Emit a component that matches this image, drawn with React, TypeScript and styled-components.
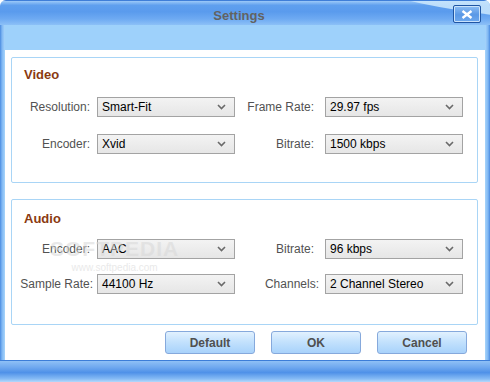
import { ReactElement } from "react";
import styled, { createGlobalStyle } from "styled-components";

const GlobalStyle = createGlobalStyle`
  html, body {
    margin: 0;
    padding: 0;
    background: #ffffff;
  }
  body {
    font-family: "Liberation Sans", Arial, sans-serif;
  }
`;

const Window = styled.div`
  display: flex;
  flex-direction: column;
  width: 490px;
  height: 382px;
  overflow: hidden;
  border-radius: 6px 6px 0 0;
  background-color: #ffffff;
`;

const TitleBar = styled.div`
  position: relative;
  display: flex;
  align-items: center;
  justify-content: center;
  height: 25px;
  flex-shrink: 0;
  background: linear-gradient(#9cc9f8 0%, #5f9fee 18%, #5a9bed 45%, #6eaaf2 75%, #8cc0f7 100%);
  border-top: 1px solid #3f7ed8;
  box-sizing: border-box;
  overflow: hidden;

  &::after {
    content: "";
    position: absolute;
    left: 340px;
    top: -40px;
    width: 300px;
    height: 62px;
    border-radius: 0 0 0 100%;
    background: linear-gradient(#d4ebfd, #c2e2fc);
    opacity: 0.9;
  }
`;

const Title = styled.span`
  position: relative;
  z-index: 1;
  color: #626262;
  font-size: 13px;
  font-weight: 700;
  margin-top: 4px;
  margin-left: -12px;
`;

const CloseButton = styled.div`
  position: absolute;
  z-index: 1;
  right: 9px;
  top: 4px;
  display: flex;
  align-items: center;
  justify-content: center;
  width: 28px;
  height: 18px;
  box-sizing: border-box;
  border: 1px solid #1f55a3;
  border-radius: 2px;
  background: linear-gradient(#8cbdf3, #5a98e6 55%, #6ea9ee);
  box-shadow: inset 0 0 0 1px #c9e2fb;
`;

const Frame = styled.div`
  display: flex;
  flex: 1;
  min-height: 0;
`;

const SideBorder = styled.div`
  width: 5px;
  flex-shrink: 0;
  background: linear-gradient(to right, #4a8be0, #7fb7f3 40%, #a8d5fb);
`;

const RightBorder = styled(SideBorder)`
  background: linear-gradient(to left, #4a8be0, #7fb7f3 40%, #a8d5fb);
`;

const Client = styled.div`
  display: flex;
  flex-direction: column;
  flex: 1;
  min-width: 0;
`;

const Band = styled.div`
  height: 25px;
  flex-shrink: 0;
  background-color: #9ed1fb;
`;

const Content = styled.div`
  position: relative;
  display: flex;
  flex-direction: column;
  flex: 1;
  padding: 7px 7px 0 6px;
  background-color: #ffffff;
`;

const GroupBox = styled.div<{ $top: number }>`
  display: flex;
  flex-direction: column;
  height: 126px;
  box-sizing: border-box;
  padding-top: ${props => props.$top}px;
  border: 1px solid #a9d5f6;
  border-radius: 2px;
  margin-bottom: 16px;
`;

const GroupTitle = styled.div<{ $space: number }>`
  color: #8a3a10;
  font-size: 13px;
  font-weight: 700;
  height: 16px;
  line-height: 16px;
  margin-left: 12px;
  margin-bottom: ${props => props.$space}px;
`;

const Row = styled.div<{ $space?: number }>`
  display: flex;
  align-items: center;
  height: 20px;
  margin-top: ${props => props.$space ?? 0}px;
`;

const Label = styled.label<{ $width: number; $space: number }>`
  width: ${props => props.$width}px;
  margin-right: ${props => props.$space}px;
  flex-shrink: 0;
  text-align: right;
  white-space: nowrap;
  color: #525252;
  font-size: 12px;
`;

const Select = styled.div`
  display: flex;
  align-items: center;
  justify-content: space-between;
  width: 138px;
  height: 20px;
  flex-shrink: 0;
  box-sizing: border-box;
  padding: 0 8px 0 4px;
  border: 1px solid #a3a3a3;
  background: linear-gradient(#f3f3f3, #e6e6e6);
  color: #000000;
  font-size: 12px;
`;

const ButtonRow = styled.div`
  display: flex;
  justify-content: flex-end;
  gap: 16px;
  margin-top: -10px;
  padding-right: 11px;
`;

const Button = styled.button`
  width: 90px;
  height: 23px;
  padding: 0;
  border: 1px solid #86a9dc;
  border-radius: 3px;
  background: linear-gradient(#e2f1fe, #c4e2fd 45%, #a8d2fb);
  color: #505050;
  font-family: "Liberation Sans", Arial, sans-serif;
  font-size: 12px;
  font-weight: 700;
`;

const Watermark = styled.div`
  position: absolute;
  left: 45px;
  top: 187px;
  display: flex;
  flex-direction: column;
  align-items: center;
  color: #d8d8d8;
  opacity: 0.55;
  pointer-events: none;
`;

const WatermarkName = styled.span`
  font-size: 21px;
  font-weight: 700;
  letter-spacing: 1px;
`;

const WatermarkUrl = styled.span`
  margin-top: 1px;
  font-size: 10px;
`;

const BottomBar = styled.div`
  height: 21px;
  flex-shrink: 0;
  border-top: 1px solid #3c7dd8;
  background: linear-gradient(#8fc0f6 0%, #6fa8ef 30%, #4f91e8 55%, #86bbf5 85%, #b3d8fb 100%);
`;

function Chevron(): ReactElement {
  return (
    <svg width="9" height="6" viewBox="0 0 9 6">
      <path d="M1 1 L4.5 4.5 L8 1" fill="none" stroke="#6a6a6a" strokeWidth="1.6" />
    </svg>
  );
}

type FieldProps = {
  label: string;
  value: string;
  labelWidth: number;
  space: number;
};

function Field({ label, value, labelWidth, space }: FieldProps): ReactElement {
  return (
    <>
      <Label $width={labelWidth} $space={space}>
        {label}
      </Label>
      <Select>
        <span>{value}</span>
        <Chevron />
      </Select>
    </>
  );
}

function App(): ReactElement {
  return (
    <>
      <GlobalStyle />
      <Window>
        <TitleBar>
          <Title>Settings</Title>
          <CloseButton>
            <svg width="12" height="9" viewBox="0 0 12 9">
              <path d="M1.5 1 L10.5 8 M10.5 1 L1.5 8" stroke="#ffffff" strokeWidth="2.4" />
            </svg>
          </CloseButton>
        </TitleBar>
        <Frame>
          <SideBorder />
          <Client>
            <Band />
            <Content>
              <GroupBox $top={9}>
                <GroupTitle $space={14}>Video</GroupTitle>
                <Row>
                  <Field label="Resolution:" value="Smart-Fit" labelWidth={78} space={7} />
                  <Field label="Frame Rate:" value="29.97 fps" labelWidth={79} space={11} />
                </Row>
                <Row $space={17}>
                  <Field label="Encoder:" value="Xvid" labelWidth={78} space={7} />
                  <Field label="Bitrate:" value="1500 kbps" labelWidth={79} space={11} />
                </Row>
              </GroupBox>
              <GroupBox $top={11}>
                <GroupTitle $space={12}>Audio</GroupTitle>
                <Row>
                  <Field label="Encoder:" value="AAC" labelWidth={78} space={7} />
                  <Field label="Bitrate:" value="96 kbps" labelWidth={79} space={11} />
                </Row>
                <Row $space={15}>
                  <Field label="Sample Rate:" value="44100 Hz" labelWidth={81} space={4} />
                  <Field label="Channels:" value="2 Channel Stereo" labelWidth={84} space={6} />
                </Row>
              </GroupBox>
              <ButtonRow>
                <Button>Default</Button>
                <Button>OK</Button>
                <Button>Cancel</Button>
              </ButtonRow>
              <Watermark>
                <WatermarkName>SOFTPEDIA</WatermarkName>
                <WatermarkUrl>www.softpedia.com</WatermarkUrl>
              </Watermark>
            </Content>
          </Client>
          <RightBorder />
        </Frame>
        <BottomBar />
      </Window>
    </>
  );
}

export default App;
